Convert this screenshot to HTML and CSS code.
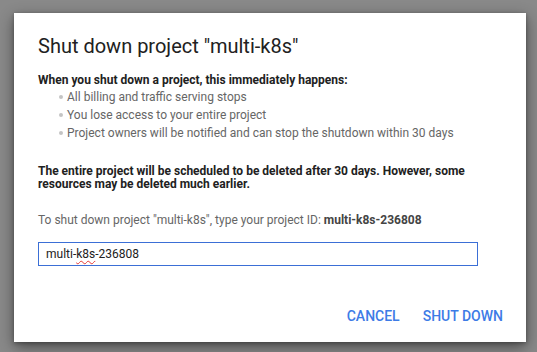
FILE: index.html
```html
<!DOCTYPE html>
<html>
<head>
<meta charset="utf-8">
<link rel="stylesheet" href="styles.css">
</head>
<body>
<div class="dialog">
  <h1 class="title">Shut down project "multi-k8s"</h1>
  <p class="lead">When you shut down a project, this immediately happens:</p>
  <ul class="list">
    <li>All billing and traffic serving stops</li>
    <li>You lose access to your entire project</li>
    <li>Project owners will be notified and can stop the shutdown within 30 days</li>
  </ul>
  <p class="warn">The entire project will be scheduled to be deleted after 30 days. However, some resources may be deleted much earlier.</p>
  <p class="hint">To shut down project "multi-k8s", type your project ID: <span class="pid">multi-k8s-236808</span></p>
  <div class="input">multi-<span class="spell">k8s</span>-236808</div>
  <div class="actions">
    <span class="btn">CANCEL</span>
    <span class="btn">SHUT DOWN</span>
  </div>
</div>
</body>
</html>
```
FILE: styles.css
```css
html, body { margin: 0; padding: 0; }
body {
  background: #898989;
  width: 537px;
  height: 352px;
  padding: 13px 0 0 14px;
  box-sizing: border-box;
  font-family: Roboto, "Noto Sans", sans-serif;
  overflow: hidden;
}
.dialog {
  width: 512px;
  height: 329px;
  box-sizing: border-box;
  background: #fff;
  box-shadow: 0 5px 14px rgba(0,0,0,0.45), 0 1px 4px rgba(0,0,0,0.3);
  padding: 20px 23px 0 24px;
  display: flex;
  flex-direction: column;
}
.title {
  margin: 0;
  font-size: 20px;
  font-weight: 400;
  color: #212121;
  line-height: 26px;
}
.lead {
  margin: 13px 0 0 0;
  font-size: 12px;
  font-weight: 700;
  color: #212121;
  line-height: 16px;
}
.list {
  margin: 0;
  padding: 0 0 0 29px;
  list-style: none;
}
.list li {
  position: relative;
  font-size: 12px;
  color: #666;
  line-height: 18px;
}
.list li::before {
  content: "";
  position: absolute;
  left: -8px;
  top: 7px;
  width: 4px;
  height: 4px;
  border-radius: 50%;
  background: #c4c4c4;
}
.warn {
  margin: 23px 0 0 0;
  font-size: 12px;
  font-weight: 700;
  color: #212121;
  line-height: 13px;
}
.hint {
  margin: 20px 0 0 0;
  font-size: 12px;
  color: #666;
  line-height: 18px;
}
.pid { font-weight: 700; color: #444; }
.input {
  margin-top: 13px;
  width: 440px;
  height: 24px;
  box-sizing: border-box;
  border: 1px solid #3b6fd6;
  padding: 0 7px;
  font-size: 12px;
  line-height: 22px;
  color: #212121;
}
.spell {
  text-decoration: underline wavy #e53935;
  text-decoration-thickness: 1px;
  text-underline-offset: 2px;
}
.actions {
  margin-top: auto;
  display: flex;
  justify-content: flex-end;
  gap: 23px;
  padding: 0 0 17px 0;
}
.btn {
  font-size: 14px;
  font-weight: 500;
  color: #3d7be6;
  line-height: 18px;
}
```
